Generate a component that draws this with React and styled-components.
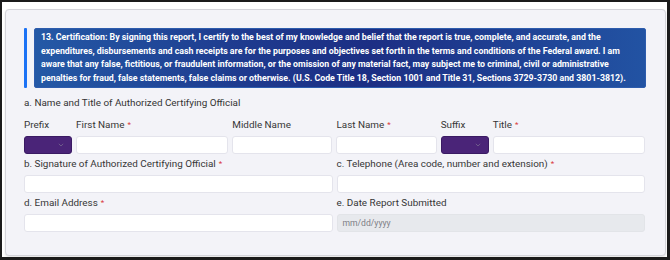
import React from 'react';
import styled, { createGlobalStyle } from 'styled-components';

const GlobalStyle = createGlobalStyle`
  * { box-sizing: border-box; }
  html, body { margin: 0; padding: 0; background: #fff; }
  body {
    font-family: Roboto, "Liberation Sans", sans-serif;
    color: #333;
  }
`;

const Frame = styled.div`
  width: 670px;
  height: 260px;
  border: 2px solid #1b1b1b;
  border-bottom-width: 3px;
  border-right-width: 3px;
  padding: 7px 1px 1px 3px;
  background: #fff;
`;

const Panel = styled.section`
  height: 100%;
  background: #f3f3f8;
  border: 1px solid #d4d4da;
  border-radius: 4px;
  box-shadow: 0 1px 2px rgba(0, 0, 0, 0.12);
  padding: 18px 18px 0 18px;
`;

const Notice = styled.div`
  display: flex;
  gap: 7px;
  margin-bottom: 9px;
`;

const Accent = styled.div`
  width: 3px;
  flex: none;
  background: #1b72f5;
  border-radius: 1px;
`;

const Banner = styled.p`
  margin: 0;
  width: 612px;
  padding: 2px 6px;
  border-radius: 2px;
  border: 1px solid #2d5cad;
  background: linear-gradient(90deg, #2459a6 0%, #1e3a8e 35%, #1c2e84 55%, #2253a3 100%);
  color: #fff;
  font-weight: 700;
  font-size: 8.8px;
  line-height: 13.5px;
  white-space: nowrap;
`;

const SectionLabel = styled.div`
  font-size: 9.9px;
  line-height: 12px;
  margin-bottom: 10px;
`;

const Grid = styled.div`
  display: grid;
  grid-template-columns: repeat(12, 1fr);
  column-gap: 4px;
  width: 621px;
  margin-bottom: 4px;
`;

const Field = styled.div`
  grid-column: span ${p => p.span};
  display: flex;
  flex-direction: column;
  gap: 5px;
`;

const Label = styled.label`
  font-size: 9.9px;
  line-height: 12px;
  color: #363636;
  white-space: nowrap;
`;

const Req = styled.span`
  color: #d9383a;
  font-size: 8px;
  margin-left: 3px;
  vertical-align: 1px;
`;

const Input = styled.div`
  height: 18px;
  background: ${p => (p.disabled ? '#e7e9ed' : '#fff')};
  border: 1px solid ${p => (p.disabled ? '#e2e4e8' : '#e4e4ec')};
  border-radius: 3px;
  font-size: 8.6px;
  color: #7d7d85;
  display: flex;
  align-items: center;
  padding-left: 5px;
`;

const Select = styled.div`
  height: 18px;
  background: #4a2478;
  border: 1px solid #3a1a63;
  border-radius: 3px;
  display: flex;
  align-items: center;
  justify-content: flex-end;
  padding-right: 7px;
`;

const Chevron = () => (
  <svg width="6" height="4" viewBox="0 0 6 4">
    <path d="M0.8 0.8 L3 3 L5.2 0.8" fill="none" stroke="#6d5a8a" strokeWidth="1" />
  </svg>
);

const Required = ({ children }) => (
  <Label>
    {children}
    <Req>*</Req>
  </Label>
);

export default function App() {
  return (
    <>
      <GlobalStyle />
      <Frame>
        <Panel>
          <Notice>
            <Accent />
            <Banner>
              13. Certification: By signing this report, I certify to the best of my knowledge and
              belief that the report is true, complete, and accurate, and the
              <br />
              expenditures, disbursements and cash receipts are for the purposes and objectives set
              forth in the terms and conditions of the Federal award. I am
              <br />
              aware that any false, fictitious, or fraudulent information, or the omission of any
              material fact, may subject me to criminal, civil or administrative
              <br />
              penalties for fraud, false statements, false claims or otherwise. (U.S. Code Title 18,
              Section 1001 and Title 31, Sections 3729-3730 and 3801-3812).
            </Banner>
          </Notice>
          <SectionLabel>a. Name and Title of Authorized Certifying Official</SectionLabel>
          <Grid>
            <Field span={1}>
              <Label>Prefix</Label>
              <Select><Chevron /></Select>
            </Field>
            <Field span={3}>
              <Required>First Name</Required>
              <Input />
            </Field>
            <Field span={2}>
              <Label>Middle Name</Label>
              <Input />
            </Field>
            <Field span={2}>
              <Required>Last Name</Required>
              <Input />
            </Field>
            <Field span={1}>
              <Label>Suffix</Label>
              <Select><Chevron /></Select>
            </Field>
            <Field span={3}>
              <Required>Title</Required>
              <Input />
            </Field>
          </Grid>
          <Grid>
            <Field span={6}>
              <Required>b. Signature of Authorized Certifying Official</Required>
              <Input />
            </Field>
            <Field span={6}>
              <Required>c. Telephone (Area code, number and extension)</Required>
              <Input />
            </Field>
          </Grid>
          <Grid>
            <Field span={6}>
              <Required>d. Email Address</Required>
              <Input />
            </Field>
            <Field span={6}>
              <Label>e. Date Report Submitted</Label>
              <Input disabled>mm/dd/yyyy</Input>
            </Field>
          </Grid>
        </Panel>
      </Frame>
    </>
  );
}
